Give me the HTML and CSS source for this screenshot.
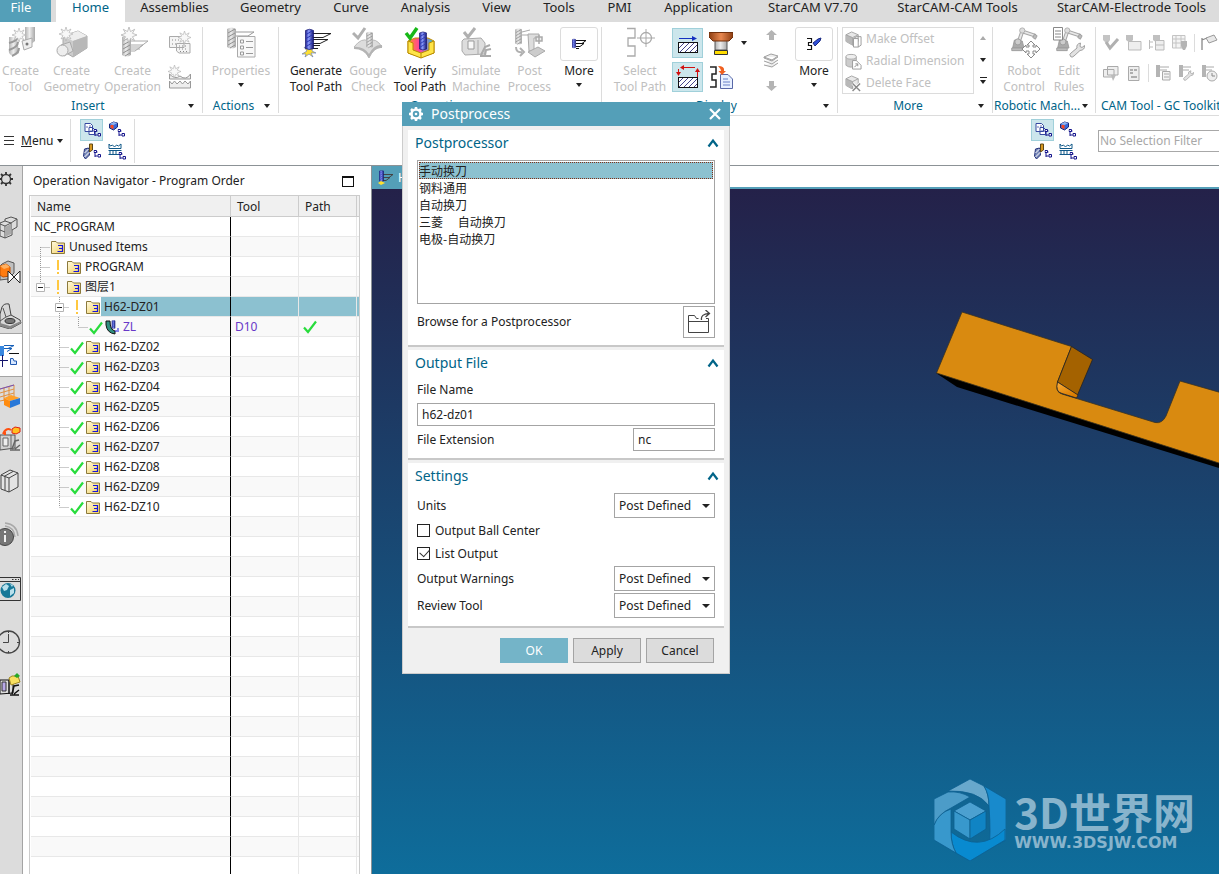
FILE: index.html
```html
<!DOCTYPE html>
<html lang="en">
<head>
<meta charset="utf-8">
<title>Postprocess</title>
<link rel="stylesheet" href="styles.css">
</head>
<body>
<svg class="defs" aria-hidden="true">
  <defs>
    <linearGradient id="gFolder" x1="0" y1="0" x2="1" y2="1"><stop offset="0" stop-color="#fffbe0"/><stop offset="1" stop-color="#f3cf60"/></linearGradient>
    <linearGradient id="gGray" x1="0" x2="1"><stop offset="0" stop-color="#b0b0b0"/><stop offset=".45" stop-color="#ededed"/><stop offset="1" stop-color="#a8a8a8"/></linearGradient>
    <linearGradient id="gBlue" x1="0" x2="1"><stop offset="0" stop-color="#20208c"/><stop offset=".4" stop-color="#8c9cff"/><stop offset="1" stop-color="#14146c"/></linearGradient>
    <linearGradient id="gCopper" x1="0" x2="1"><stop offset="0" stop-color="#8c3c10"/><stop offset=".5" stop-color="#e88850"/><stop offset="1" stop-color="#8c3c10"/></linearGradient>
    <linearGradient id="gRainbow" x1="0" x2="1"><stop offset="0" stop-color="#ff9020"/><stop offset=".45" stop-color="#ff40a0"/><stop offset="1" stop-color="#20c8d8"/></linearGradient>
    <pattern id="pHatch" width="5" height="5" patternUnits="userSpaceOnUse"><path d="M-1 6L6-1M-1 1L1-1M4 6L6 4" stroke="#14146c" stroke-width=".8"/></pattern>
  </defs>
  <symbol id="folder" viewBox="0 0 14 14"><path d="M.5 13.500V1.500H5L6.500 3H13.500V13.500Z" fill="url(#gFolder)" stroke="#8c7a3c"/><path d="M7 5.500H11.500V8.500H8V8.500M11.500 8.500V11.500H6.500" fill="none" stroke="#1414e0" stroke-width="1.200"/></symbol>
  <symbol id="check" viewBox="0 0 14 14"><path d="M1 7.500L5 12L13 1.500" fill="none" stroke="#28dc3c" stroke-width="2.200"/></symbol>
  <symbol id="minus" viewBox="0 0 9 9"><path d="M.5.500H8.500V8.500H.5Z" fill="#fff" stroke="#b4b4b4"/><path d="M2 4.500H7" stroke="#222"/></symbol>
  <symbol id="star" viewBox="0 0 14 14"><path d="M7 0L8.300 4L12 2L10 5.500L14 7L10 8.500L12 12L8.300 10L7 14L5.700 10L2 12L4 8.500L0 7L4 5.500L2 2L5.700 4Z" fill="#f8f8f8" stroke="#b4b4b4" stroke-width=".7"/></symbol>
  <symbol id="drillgray" viewBox="0 0 9 22"><path d="M0 2Q4.500-1 9 2V20Q4.500 23 0 20Z" fill="url(#gGray)"/><path d="M1 6L8 2M1 10L8 6M1 14L8 10M1 18L8 14M3 21L8 18" stroke="#909090"/></symbol>
  <symbol id="drillblue" viewBox="0 0 9 22"><path d="M.5 2Q4.500-.5 8.500 2V20Q4.500 22 .5 20Z" fill="url(#gBlue)" stroke="#14146c" stroke-width=".7"/><path d="M1 6L8 2M1 10L8 6M1 14L8 10M1 18L8 14" stroke="#2a38b4"/></symbol>
  <symbol id="robot" viewBox="0 0 32 32"><path d="M3 24L5 15L14 16L16 24Z" fill="#aaa" stroke="#999"/><path d="M10 17L14 5L29 10" stroke="#a8a8a8" stroke-width="4.500" fill="none"/><path d="M10 17L14 5L29 10" stroke="#e8e8e8" stroke-width="2" fill="none"/><circle cx="14" cy="4" r="3" fill="#ddd" stroke="#aaa"/><circle cx="9" cy="17" r="3.500" fill="#ccc" stroke="#999"/><path d="M2 24H14V27H2ZM28 8L31 10L29 14L26 12Z" fill="#bbb" stroke="#999"/></symbol>
  <symbol id="wrench" viewBox="0 0 16 16"><path d="M1.500 14.500Q0 12 2 11L8 6Q7 2 11.500 1L11 4.500L13 5.500L15.500 3.500Q16 8 11 8.500L5 14Q3 16 1.500 14.500Z" fill="#e2e2e2" stroke="#a0a0a0"/></symbol>
  <symbol id="tree" viewBox="0 0 8 8"><path d="M1.500 0V7M1.500 2H4M1.500 6H4" stroke="#14148c" fill="none"/><path d="M.5.500H3V2.500H.5ZM4.500 4.500H7V7H4.500Z" fill="#fff" stroke="#14148c"/></symbol>
  <symbol id="viewProgram" viewBox="0 0 22 22"><path d="M4.500 4.500H10L12 6.500V12.500H4.500ZM8.500 8.500H12L14 10.500V15.500H8.500Z" fill="#fff" stroke="#3448a0"/><path d="M6 8H7M9 7H10M10 12H11M12 12H13" stroke="#3448a0" stroke-width="1.500"/><use href="#tree" x="13" y="10" width="8" height="8"/></symbol>
  <symbol id="viewGeometry" viewBox="0 0 22 22"><path d="M4 5L8 3L12 4V8L8 11L4 9Z" fill="#3868d8" stroke="#18287c"/><path d="M4 5L8 3L12 4L8 6Z" fill="#90b4f0"/><path d="M5 6H8V10L5 9Z" fill="#f84820"/><use href="#tree" x="12" y="10" width="8" height="8"/></symbol>
  <symbol id="viewTool" viewBox="0 0 22 22"><path d="M4 8L8 7L9 14L5 18L3 15Z" fill="#7888b8" stroke="#26347c"/><path d="M4 12L8 8M4 16L9 11" stroke="#fff"/><path d="M9 3H12V9L9 11Z" fill="#d89820" stroke="#5c4818"/><use href="#tree" x="13" y="9" width="8" height="8"/></symbol>
  <symbol id="viewMethod" viewBox="0 0 22 22"><path d="M3.500 3V7.500H15.500V3L13 5L11 4L9 6L7 4L5 5ZM3 9.500H16M3 13.500H14M4.500 9V14M7.500 9V14M10.500 9V14" fill="none" stroke="#105888"/><use href="#tree" x="13" y="11" width="8" height="8"/></symbol>
  <symbol id="cubegray" viewBox="0 0 16 16"><path d="M1 4L7 1L14 4V11L8 15L1 11Z" fill="#e8e8e8" stroke="#a4a4a4"/><path d="M1 4L8 7V15L1 11Z" fill="#b8b8b8"/><path d="M1 4L8 7L14 4M8 7V15" fill="none" stroke="#a4a4a4"/></symbol>
  <symbol id="up" viewBox="0 0 11 10"><path d="M5.500 0L11 5H8V10H3V5H0Z" fill="#b4b4b4"/></symbol>
  <symbol id="chev" viewBox="0 0 12 10"><path d="M1.500 8.500L6 2.500L10.500 8.500" fill="none" stroke="#006488" stroke-width="2.200"/></symbol>
</svg>

<nav class="tabs" aria-label="Ribbon tabs">
  <a class="tab file" href="#">File</a><a class="tab active" href="#">Home</a><a class="tab" href="#">Assemblies</a><a class="tab" href="#">Geometry</a><a class="tab" href="#">Curve</a><a class="tab" href="#">Analysis</a><a class="tab" href="#">View</a><a class="tab" href="#">Tools</a><a class="tab" href="#">PMI</a><a class="tab" href="#">Application</a><a class="tab" href="#">StarCAM V7.70</a><a class="tab" href="#">StarCAM-CAM Tools</a><a class="tab" href="#">StarCAM-Electrode Tools</a>
</nav>

<section class="ribbon" aria-label="Ribbon">
  <div class="group g-insert">
    <div class="gbody">
      <button class="big off">
        <svg viewBox="0 0 32 32"><path d="M20 0H30V14L25 18V13H20Z" fill="url(#gGray)"/><path d="M17 14L27 11V20L19 23Z" fill="#eee" stroke="#aaa"/><circle cx="22" cy="17" r="1.500" fill="#777"/><path d="M4 10H12L14 26Q10 30 6 28Q3 26 4 22Z" fill="url(#gGray)"/><path d="M4 16Q12 14 13 10M4 23Q13 20 13 15M7 29Q14 26 14 21" fill="none" stroke="#999" stroke-width="2"/><use href="#star" x="7" y="1" width="14" height="14"/></svg>
        <span>Create<br>Tool</span></button>
      <button class="big off">
        <svg viewBox="0 0 32 32"><path d="M7 9L22 4L31 9V21L17 30L7 24Z" fill="#ccc" stroke="#aaa"/><path d="M7 9L22 4L31 9L17 14Z" fill="#eee"/><path d="M17 14L31 9V21L17 30Z" fill="#b8b8b8"/><path d="M5 18L14 15L17 24L8 29Z" fill="#ddd" stroke="#aaa"/><circle cx="6.500" cy="23.500" r="5.500" fill="#eee" stroke="#aaa"/><use href="#star" x="3" y="0" width="14" height="14"/></svg>
        <span>Create<br>Geometry</span></button>
      <button class="big off">
        <svg viewBox="0 0 32 32"><path d="M12 14H31L23 20H12M12 18H26L18 24H12M14 22H23" fill="none" stroke="#aaa"/><use href="#drillgray" x="5" y="8" width="9" height="22"/><use href="#star" x="4" y="0" width="16" height="16"/></svg>
        <span>Create<br>Operation</span></button>
      <div class="stack">
        <button class="small" aria-label="Create Program"><svg viewBox="0 0 24 24"><path d="M1.500 5.500H14L16 8V16.500H1.500ZM8.500 12.500H22V22H11L8.500 20Z" fill="#f4f4f4" stroke="#aaa"/><path d="M4 9H13M4 13H8M11 15H20M11 18H20M12 20.500H20" stroke="#888" stroke-dasharray="1 2"/><use href="#star" x="10" y="0" width="13" height="13"/></svg></button>
        <button class="small" aria-label="Create Method"><svg viewBox="0 0 24 24"><path d="M1.500 14V9Q7 15 12 11Q18 16 22.500 9V14Z" fill="#eee" stroke="#999"/><path d="M1.500 23V16L4 19L6.500 16L9 19L12 16L14.500 19L17 16L20 19L22.500 16V23Z" fill="#eee" stroke="#999"/><use href="#star" x="0" y="0" width="13" height="13"/></svg></button>
      </div>
    </div>
    <button class="glabel"><span>Insert</span><i class="arr"></i></button>
  </div>

  <div class="group g-actions">
    <div class="gbody">
      <button class="big off"><svg viewBox="0 0 32 32"><path d="M10 5H29L23 9H10" fill="none" stroke="#999"/><use href="#drillgray" x="2" y="0" width="9" height="22"/><path d="M12.500 9.500H30V30H12.500Z" fill="#f8f8f8" stroke="#aaa"/><path d="M15.500 13H18.500V16H15.500ZM15.500 19H18.500V22H15.500ZM15.500 25H18.500V28H15.500ZM21 14.500H28M21 20.500H28M21 26.500H28" fill="none" stroke="#999"/></svg>
      <span>Properties</span><i class="arr"></i></button>
    </div>
    <button class="glabel"><span>Actions</span><i class="arr"></i></button>
  </div>

  <div class="group g-ops">
    <div class="gbody">
      <button class="big"><svg viewBox="0 0 32 32"><path d="M12 6.500H31L23 10.500H12M12 12.500H28L20 16.500H12M12 18.500H20M12 21.500H18" fill="none" stroke="#222"/><path d="M2 27L7 24L4 20L9 23L13 19L12 24L16 26L11 26L13 30L9 27L5 30L6 27Z" fill="#ffe030" stroke="#5870b8" stroke-width=".6"/><use href="#drillblue" x="5" y="1" width="9" height="23"/></svg><span>Generate<br>Tool Path</span></button>
      <button class="big off"><svg viewBox="0 0 32 32"><path d="M2 20Q10 10 16 14Q24 10 30 20Q22 20 17 31Q12 20 2 20Z" fill="#ddd" stroke="#bbb"/><path d="M2 20Q12 19 17 27Q22 17 30 18V21Q22 20 17 31Q12 22 2 22Z" fill="#b4b4b4"/><use href="#drillgray" x="14" y="4" width="7" height="18"/><path d="M1 6L6 11L13 1" fill="none" stroke="#b0b0b0" stroke-width="3"/></svg><span>Gouge<br>Check</span></button>
      <button class="big"><svg viewBox="0 0 32 32"><path d="M4 14L11 11H24L30 14V26L17 30L4 26Z" fill="url(#gRainbow)" stroke="#c89000"/><path d="M4 14L9 16V23L17 26L25 23V16L30 14V26L17 31L4 26Z" fill="#ffe448" stroke="#b88c00"/><path d="M17 26V31" stroke="#b88c00"/><use href="#drillblue" x="15" y="4" width="8" height="20"/><path d="M2 6L6 11L13 1" fill="none" stroke="#18b818" stroke-width="3.500"/></svg><span>Verify<br>Tool Path</span></button>
      <button class="big off"><svg viewBox="0 0 32 32"><path d="M4 12L21 11L25 16V27L5 28L2 24V14Z" fill="#ddd" stroke="#aaa"/><path d="M8 14H14V22H8Z" fill="#f8f8f8" stroke="#999"/><path d="M18 13V27" stroke="#aaa"/><path d="M21 28L25 20L30 18M25 28L26 23L31 22M20 29H31" fill="none" stroke="#aaa" stroke-width="2"/><path d="M4 5L8 10L15 1" fill="none" stroke="#b0b0b0" stroke-width="3"/></svg><span>Simulate<br>Machine</span></button>
      <button class="big off"><svg viewBox="0 0 32 32"><use href="#drillgray" x="1" y="1" width="7" height="17"/><path d="M8 5L16 3M8 8H17" stroke="#aaa"/><path d="M14 7H25V11H20V24H15Z" fill="#ddd" stroke="#aaa"/><path d="M25 8V17M22 10H28V14H22Z" fill="#eee" stroke="#aaa" stroke-width="1.500"/><path d="M14 25L24 20L31 24L21 30Z" fill="#ccc" stroke="#aaa"/><path d="M2 20Q2 26 8 25M6 21L10 25L6 29" fill="none" stroke="#b0b0b0" stroke-width="2"/></svg><span>Post<br>Process</span></button>
      <button class="big more"><span class="mbox"><svg viewBox="0 0 18 18"><path d="M6 5.500H16L12 8.500H6M6 8.500H14L10 11.500H6M6 13.500H9" fill="none" stroke="#111"/><use href="#drillblue" x="2" y="3" width="4" height="11"/></svg></span><span>More</span><i class="arr"></i></button>
    </div>
    <button class="glabel"><span>Operations</span></button>
  </div>

  <div class="group g-display">
    <div class="gbody">
      <button class="big off"><svg viewBox="0 0 32 32"><path d="M3 1.500H11V11H4V19H11V29H3" fill="none" stroke="#aaa" stroke-width="1.300"/><circle cx="22" cy="11" r="5.500" fill="none" stroke="#aaa" stroke-width="1.300"/><path d="M22 2V20M13 11H31" stroke="#aaa"/></svg><span>Select<br>Tool Path</span></button>
      <div class="toggles">
        <button class="toggle" aria-label="Show feed"><svg viewBox="0 0 24 24"><path d="M3 7.500H19" stroke="#1430c0"/><path d="M16 5L21 7.500L16 10Z" fill="#1430c0"/><rect x="2.500" y="11.500" width="19" height="10" fill="#fff"/><rect x="2.500" y="11.500" width="19" height="10" fill="url(#pHatch)" stroke="#111"/></svg></button>
        <button class="toggle" aria-label="Show travel"><svg viewBox="0 0 24 24"><path d="M6 2.500H19M2.500 4V10M21.500 12V7" stroke="#d01010"/><path d="M8 0V5L4 2.500ZM0 7H5L2.500 11ZM19 7H24L21.500 3Z" fill="#d01010"/><rect x="2.500" y="12.500" width="19" height="10" fill="#fff"/><rect x="2.500" y="12.500" width="19" height="10" fill="url(#pHatch)" stroke="#111"/></svg></button>
      </div>
      <div class="toggles">
        <button class="plain" aria-label="Tool display"><svg viewBox="0 0 24 24"><path d="M6 6H18V19H6Z" fill="url(#gGray)" stroke="#555"/><path d="M0 1.500H24V6L20 10H4L0 6Z" fill="url(#gCopper)" stroke="#70300c"/><path d="M5.500 19.500H18.500V23.500H5.500Z" fill="#ffdc00" stroke="#333"/></svg></button>
        <button class="plain" aria-label="Export path"><svg viewBox="0 0 24 24"><path d="M1 2H7V9H3V15H7V22H1" fill="none" stroke="#222" stroke-width="1.500"/><path d="M11.500 9.500H19L23.500 14V23.500H11.500Z" fill="#e8f0ff" stroke="#5868a8"/><path d="M14 14H19M14 17H21M14 20H21" stroke="#6880c8"/><path d="M9 1Q16 1 15 6H17L13 10L9.500 6H12Q12 4 9 1Z" fill="#f06020"/></svg></button>
      </div>
      <i class="arr dd"></i>
      <div class="layers">
        <svg viewBox="0 0 11 10"><use href="#up"/></svg>
        <svg class="mid" viewBox="0 0 16 15"><path d="M1 4L8 1L15 3L9 7ZM1 8L9 11L15 7M1 12L9 14L15 10M1 4V5L9 8L15 4" fill="#eee" stroke="#a0a0a0"/></svg>
        <svg class="flip" viewBox="0 0 11 10"><use href="#up"/></svg>
      </div>
      <button class="big more"><span class="mbox"><svg viewBox="0 0 18 18"><path d="M2 3.500H6.500V7.500H3.500V10.500H6.500V14.500H2" fill="none" stroke="#111" stroke-width="1.200"/><path d="M8 8L13 4L16 3L15 6L10 11Z" fill="#3050d8" stroke="#182880"/></svg></span><span>More</span><i class="arr"></i></button>
    </div>
    <button class="glabel"><span>Display</span><i class="arr"></i></button>
  </div>

  <div class="group g-more">
    <div class="gbody">
      <div class="gallery">
        <button><svg viewBox="0 0 18 18"><use href="#cubegray" width="16" height="16"/><path d="M9 8H14V17H9Z" fill="#fff" stroke="#999"/><path d="M9 8L12 6H17V15L14 17" fill="none" stroke="#999"/></svg>Make Offset</button>
        <button><svg viewBox="0 0 18 18"><path d="M1 4Q6 0 12 4V13Q6 17 1 13Z" fill="#ccc" stroke="#aaa"/><ellipse cx="6.500" cy="4" rx="5.500" ry="2.500" fill="#eee" stroke="#aaa"/><path d="M8 8H12L17 13V17H8Z" fill="#fff" stroke="#999"/><path d="M10 15L13 12M11 11.500H13.500V14" stroke="#888" fill="none"/></svg>Radial Dimension</button>
        <button><svg viewBox="0 0 18 18"><use href="#cubegray" width="16" height="16"/><path d="M8 9L16 17M16 9L8 17" stroke="#fff" stroke-width="3"/><path d="M8 9L16 17M16 9L8 17" stroke="#888" stroke-width="1.500"/></svg>Delete Face</button>
      </div>
      <div class="gscroll"><i class="arr upg"></i><i class="arr"></i><i class="arr bar"></i></div>
    </div>
    <button class="glabel"><span>More</span><i class="arr"></i></button>
  </div>

  <div class="group g-robot">
    <div class="gbody">
      <button class="big off"><svg viewBox="0 0 32 32"><use href="#robot" width="32" height="28"/><path d="M23 14L27 18H25V20H28V18L32 22L28 26V24H25V27H27L23 31L19 27H21V24H18V26L14 22L18 18V20H21V18H19Z" fill="#fff" stroke="#888"/></svg><span>Robot<br>Control</span></button>
      <button class="big off"><svg viewBox="0 0 32 32"><use href="#robot" width="32" height="28"/><path d="M.5.500H9.500V13H.5Z" fill="#fff" stroke="#888"/><path d="M2 4H8M2 7H8M2 10H8" stroke="#888"/><use href="#wrench" x="16" y="15" width="16" height="16"/></svg><span>Edit<br>Rules</span></button>
    </div>
    <button class="glabel"><span>Robotic Mach...</span><i class="arr"></i></button>
  </div>

  <div class="group g-gc">
    <div class="gbody gc">
      <div class="gcrow">
        <svg viewBox="0 0 18 18"><path d="M1 1H8V6L6 9H4L1 6Z" fill="#c4c4c4"/><path d="M4 8L8 14L16 5" fill="none" stroke="#b0b0b0" stroke-width="3"/></svg>
        <svg viewBox="0 0 18 18"><path d="M1 1H8V6L5 9L1 6Z" fill="#c0c0c0"/><path d="M3.500 7.500H16V16H3.500Z" fill="#eee" stroke="#bbb"/></svg>
        <svg viewBox="0 0 18 18"><path d="M5 1H12V6L9 9L5 6Z" fill="#c0c0c0"/><path d="M1.500 6V15M1 8H5M1 13H5M7.500 6.500H16V16H7.500ZM7 11H16" fill="#eee" stroke="#bbb"/></svg>
        <svg viewBox="0 0 18 18"><path d="M1.500 1.500H14V14H1.500ZM1 5H14M1 9H14M5 1V14M10 1V14" fill="#f4f4f4" stroke="#c4c4c4"/><path d="M10 7H16V12L14 16H12L10 12Z" fill="#b4b4b4"/></svg>
        <i class="vsep"></i>
        <svg viewBox="0 0 18 18"><path d="M2 4V16M2 6L7 4" stroke="#888" fill="none" stroke-width="1.300"/><path d="M6 4L14 1L17 6L9 9Z" fill="#e8e8e8" stroke="#999"/></svg>
      </div>
      <div class="gcrow">
        <svg viewBox="0 0 18 18"><path d="M5.500 2.500H16V11H5.500ZM1.500 5.500H12V13H1.500Z" fill="#eee" stroke="#aaa"/><path d="M9 11H14L11 17Z" fill="#bbb"/></svg>
        <svg viewBox="0 0 18 18"><path d="M3.500 2.500H14V16.500H3.500Z" fill="#eee" stroke="#aaa"/><path d="M5 6H8M9 6H12M5 9H8M6 13H12" stroke="#999" stroke-width="1.500"/></svg>
        <i class="vsep"></i>
        <svg viewBox="0 0 18 18"><path d="M2 1H6V13H2Z" fill="#b4b4b4"/><path d="M6 3H15M6 6H13" stroke="#aaa"/><path d="M8.500 7.500H16V16H8.500ZM10 10H15M10 13H15" fill="#f4f4f4" stroke="#aaa"/></svg>
        <svg viewBox="0 0 18 18"><path d="M2 1H6V13H2Z" fill="#b4b4b4"/><path d="M6 3H14M6 6H12" stroke="#aaa"/><use href="#wrench" x="6" y="6" width="11" height="11"/></svg>
        <svg viewBox="0 0 18 18"><path d="M2 1H6V13H2Z" fill="#b4b4b4"/><path d="M6 3H14M6 6H12" stroke="#aaa"/><circle cx="12" cy="12" r="5" fill="#eee" stroke="#aaa"/><path d="M12 9V12H15" stroke="#888" fill="none"/></svg>
      </div>
    </div>
    <button class="glabel"><span>CAM Tool - GC Toolkits</span></button>
  </div>
</section>

<section class="bar2" aria-label="Border bar">
  <button class="menu"><svg viewBox="0 0 10 10"><path d="M0 .5H10M0 4.500H10M0 8.500H10" stroke="#333"/></svg><span><u>M</u>enu</span><i class="arr"></i></button>
  <div class="views">
    <button class="on" aria-label="Program Order View"><svg><use href="#viewProgram"/></svg></button>
    <button aria-label="Geometry View"><svg><use href="#viewGeometry"/></svg></button>
    <button aria-label="Machine Tool View"><svg><use href="#viewTool"/></svg></button>
    <button aria-label="Method View"><svg><use href="#viewMethod"/></svg></button>
  </div>
  <div class="views right">
    <button class="on" aria-label="Program Order"><svg><use href="#viewProgram"/></svg></button>
    <button aria-label="Geometry"><svg><use href="#viewGeometry"/></svg></button>
    <button aria-label="Machine Tool"><svg><use href="#viewTool"/></svg></button>
    <button aria-label="Method"><svg><use href="#viewMethod"/></svg></button>
  </div>
  <input class="filter" type="text" placeholder="No Selection Filter" aria-label="Selection filter">
</section>

<main class="work">
  <aside class="side">
    <svg viewBox="4 0 26 26"><circle cx="10" cy="13" r="4.500" fill="none" stroke="#333" stroke-width="1.300"/><path d="M10 6V8.500M10 17.500V20M3 13H5.500M14.500 13H17M5 8L7 10M13 16L15 18M5 18L7 16M13 10L15 8" stroke="#333" stroke-width="1.800"/></svg>
    <svg class="s23" viewBox="0 0 26 26"><path d="M0 8L5 6V4L11 2L17 4V12L12 15V20L5 23L0 21Z" fill="#ddd" stroke="#555"/><path d="M5 6L11 8L17 4M11 8V15M0 9L5 11L11 8M5 11V23M0 15L5 17L11 14" fill="none" stroke="#555"/><path d="M5 12L11 9V19L5 22Z" fill="#aaa"/></svg>
    <svg class="s18" viewBox="0 0 26 26"><path d="M2 5L8 2L14 4V14L8 20L0 21V7Z" fill="#c0c0c0" stroke="#555"/><path d="M0 7L6 5L10 8V17L3 18L0 16Z" fill="#ff7c10" stroke="#c05000"/><path d="M0 7L6 5L10 8L4 10Z" fill="#ffb060"/><path d="M8 12V24L20 12V24Z" fill="#fff" stroke="#222"/></svg>
    <svg class="s18" viewBox="0 0 26 26"><path d="M2 4Q4 0 9 1L11 12L20 17L21 20L10 26L0 23V11Z" fill="#d8d8d8" stroke="#444"/><path d="M3 5L6 14L0 18M6 14L11 12" fill="none" stroke="#555"/><ellipse cx="10" cy="18" rx="5" ry="2.500" fill="#777" stroke="#333"/><path d="M0 20L10 23L21 18V20L10 26L0 23Z" fill="#888"/></svg>
    <div class="sactive"><svg viewBox="0 0 26 26"><path d="M0 3H4V13H0Z" fill="#3888e0"/><path d="M4 2.500H14L8 5.500H4M4 5.500H12L7 8.500" fill="none" stroke="#1860b8"/><path d="M9 10.500H19" stroke="#111"/><path d="M2.500 12V24M0 17.500H8" stroke="#14146c"/><path d="M10.500 15.500H13L14 18H16.500V21.500H10.500Z" fill="#d8e8ff" stroke="#2058b0"/></svg></div>
    <svg class="s7" viewBox="0 0 26 26"><path d="M0 5L14 1V14M0 9L14 5M0 13L14 9M4 4V17M9 2V15M0 17L5 16" fill="none" stroke="#e09040"/><path d="M0 5L14 1" stroke="#7050c0"/><path d="M4 14L11 11L20 14L10 17Z" fill="#ffa028"/><path d="M4 14L10 17V24L4 21Z" fill="#ff8c10"/><path d="M10 17L20 14V20L10 24Z" fill="#2878d8"/></svg>
    <svg class="s16" viewBox="0 0 26 26"><path d="M0 9H15V22L0 24Z" fill="#d0d0d0" stroke="#555"/><path d="M3 12H8V20H3ZM11 9V22" fill="#eee" stroke="#666"/><path d="M12 23L15 15L19 14M15 23L20 19M10 24H20" fill="none" stroke="#666" stroke-width="1.500"/><path d="M3 8Q6 1 11 4M5 6V9" fill="none" stroke="#ff5010" stroke-width="2"/><path d="M12 3L15 1L20 2V6L16 8L12 7Z" fill="#ffc020" stroke="#e02010"/></svg>
    <svg class="s16" viewBox="0 0 26 26"><path d="M1 7L10 2L18 5V19L9 24L1 21Z" fill="#e4e4e4" stroke="#444"/><path d="M1 7L9 10V24M9 10L18 5M4 8.500L13 3.500M5 22V9" fill="none" stroke="#444"/></svg>
    <svg class="s28" viewBox="0 0 26 26"><path d="M5 4Q14 5 15 15M5 1Q17 2 18 14M5 7Q11 8 12 13" fill="none" stroke="#a8a8a8" stroke-width="1.400"/><circle cx="5" cy="15" r="8.500" fill="#777" stroke="#444"/><path d="M5 13V20M5 9V11" stroke="#fff" stroke-width="1.800"/></svg>
    <svg class="s28" viewBox="0 0 26 26"><path d="M-1 1.500H20.500V24.500H-1M-1 5.500H20.500" fill="none" stroke="#333"/><path d="M12 3.500H19" stroke="#333" stroke-dasharray="1.500 1.500"/><circle cx="8" cy="14.500" r="7.500" fill="#187898"/><path d="M2 11L6 8L9 10L7 14L4 15ZM10 14L14 12L14 17L10 20ZM10 8L13 9L12 11Z" fill="#b8e0ec"/></svg>
    <svg class="s27" viewBox="0 0 26 26"><circle cx="8.500" cy="13" r="11" fill="none" stroke="#444" stroke-width="1.300"/><path d="M8.500 5V13.500H3M8.500 2V4M8.500 22V24M17 13.500H19" fill="none" stroke="#444"/></svg>
    <svg class="s18" viewBox="0 0 26 26"><path d="M0 7H13V20L0 21Z" fill="#ddd" stroke="#111"/><path d="M2 9H6V18H2Z" fill="#b8a8e8" stroke="#333"/><path d="M9 7V21M12 21L14 13L19 12M14 21L19 17M10 22H19" fill="none" stroke="#111" stroke-width="1.500"/><path d="M9 5L12 3H18L20 9L11 12Z" fill="#f8e060" stroke="#a08820"/><path d="M14 3L17 0L20 3L17 5Z" fill="#28a828"/></svg>
  </aside>

  <section class="navigator">
    <header class="ntitle"><h2>Operation Navigator - Program Order</h2><button class="maxi" aria-label="Maximize"></button></header>
    <div class="tree">
      <table>
        <colgroup><col class="c1"><col class="c2"><col class="c3"><col class="c4"></colgroup>
        <thead><tr><th>Name</th><th>Tool</th><th>Path</th><th></th></tr></thead>
        <tbody>
          <tr><td class="root">NC_PROGRAM</td><td></td><td></td><td></td></tr>
          <tr><td><div class="node"><svg class="w1"><path class="dots" d="M9.500 10V20M9.500 10.500H19"/><use href="#folder" x="20" y="3" width="14" height="14"/></svg>Unused Items</div></td><td></td><td></td><td></td></tr>
          <tr><td><div class="node"><svg class="w2"><path class="dots" d="M9.500 0V20M9.500 10.500H19"/><path class="bang" d="M27 3V13M27 15V17"/><use href="#folder" x="36" y="3" width="14" height="14"/></svg>PROGRAM</div></td><td></td><td></td><td></td></tr>
          <tr><td><div class="node"><svg class="w2"><path class="dots" d="M9.500 0V10M9.500 10.500H19"/><use href="#minus" x="5" y="6" width="9" height="9"/><path class="bang" d="M27 3V13M27 15V17"/><use href="#folder" x="36" y="3" width="14" height="14"/></svg>图层1</div></td><td></td><td></td><td></td></tr>
          <tr class="sel"><td><div class="node"><svg class="w3"><path class="dots" d="M28.500 0V20M28.500 10.500H38"/><use href="#minus" x="24" y="6" width="9" height="9"/><path class="bang" d="M46 3V13M46 15V17"/><use href="#folder" x="55" y="3" width="14" height="14"/></svg><span class="hit">H62-DZ01</span></div></td><td></td><td></td><td></td></tr>
          <tr class="op"><td><div class="node"><svg class="w4"><path class="dots" d="M28.500 0V20M47.500 0V10M47.500 10.500H57"/><use href="#check" x="58" y="4" width="14" height="14"/><path d="M75 4V8Q76 16 84 17V14Q79 13 79 4Z" fill="#309080" stroke="#111"/><use href="#drillblue" x="80" y="3" width="5" height="9"/><path d="M86 12H88M84 14H88" stroke="#1414e0"/></svg>ZL</div></td><td>D10</td><td><svg class="done" viewBox="0 0 14 14"><use href="#check"/></svg></td><td></td></tr>
          <tr><td><div class="node"><svg class="w3"><path class="dots" d="M28.500 0V20M28.500 10.500H38"/><use href="#check" x="39" y="4" width="14" height="14"/><use href="#folder" x="55" y="3" width="14" height="14"/></svg><span>H62-DZ02</span></div></td><td></td><td></td><td></td></tr>
          <tr><td><div class="node"><svg class="w3"><path class="dots" d="M28.500 0V20M28.500 10.500H38"/><use href="#check" x="39" y="4" width="14" height="14"/><use href="#folder" x="55" y="3" width="14" height="14"/></svg><span>H62-DZ03</span></div></td><td></td><td></td><td></td></tr>
          <tr><td><div class="node"><svg class="w3"><path class="dots" d="M28.500 0V20M28.500 10.500H38"/><use href="#check" x="39" y="4" width="14" height="14"/><use href="#folder" x="55" y="3" width="14" height="14"/></svg><span>H62-DZ04</span></div></td><td></td><td></td><td></td></tr>
          <tr><td><div class="node"><svg class="w3"><path class="dots" d="M28.500 0V20M28.500 10.500H38"/><use href="#check" x="39" y="4" width="14" height="14"/><use href="#folder" x="55" y="3" width="14" height="14"/></svg><span>H62-DZ05</span></div></td><td></td><td></td><td></td></tr>
          <tr><td><div class="node"><svg class="w3"><path class="dots" d="M28.500 0V20M28.500 10.500H38"/><use href="#check" x="39" y="4" width="14" height="14"/><use href="#folder" x="55" y="3" width="14" height="14"/></svg><span>H62-DZ06</span></div></td><td></td><td></td><td></td></tr>
          <tr><td><div class="node"><svg class="w3"><path class="dots" d="M28.500 0V20M28.500 10.500H38"/><use href="#check" x="39" y="4" width="14" height="14"/><use href="#folder" x="55" y="3" width="14" height="14"/></svg><span>H62-DZ07</span></div></td><td></td><td></td><td></td></tr>
          <tr><td><div class="node"><svg class="w3"><path class="dots" d="M28.500 0V20M28.500 10.500H38"/><use href="#check" x="39" y="4" width="14" height="14"/><use href="#folder" x="55" y="3" width="14" height="14"/></svg><span>H62-DZ08</span></div></td><td></td><td></td><td></td></tr>
          <tr><td><div class="node"><svg class="w3"><path class="dots" d="M28.500 0V20M28.500 10.500H38"/><use href="#check" x="39" y="4" width="14" height="14"/><use href="#folder" x="55" y="3" width="14" height="14"/></svg><span>H62-DZ09</span></div></td><td></td><td></td><td></td></tr>
          <tr><td><div class="node"><svg class="w3"><path class="dots" d="M28.500 0V10M28.500 10.500H38"/><use href="#check" x="39" y="4" width="14" height="14"/><use href="#folder" x="55" y="3" width="14" height="14"/></svg><span>H62-DZ10</span></div></td><td></td><td></td><td></td></tr>
          <tr><td></td><td></td><td></td><td></td></tr><tr><td></td><td></td><td></td><td></td></tr><tr><td></td><td></td><td></td><td></td></tr><tr><td></td><td></td><td></td><td></td></tr><tr><td></td><td></td><td></td><td></td></tr><tr><td></td><td></td><td></td><td></td></tr><tr><td></td><td></td><td></td><td></td></tr><tr><td></td><td></td><td></td><td></td></tr><tr><td></td><td></td><td></td><td></td></tr><tr><td></td><td></td><td></td><td></td></tr><tr><td></td><td></td><td></td><td></td></tr><tr><td></td><td></td><td></td><td></td></tr><tr><td></td><td></td><td></td><td></td></tr><tr><td></td><td></td><td></td><td></td></tr><tr><td></td><td></td><td></td><td></td></tr><tr><td></td><td></td><td></td><td></td></tr><tr><td></td><td></td><td></td><td></td></tr><tr><td></td><td></td><td></td><td></td></tr>
        </tbody>
      </table>
    </div>
  </section>

  <section class="graphics">
    <div class="gtabs"><a class="gtab" href="#"><svg viewBox="0 0 18 18"><path d="M7 5.500H17L13 8.500H7M7 8.500H14L10 11.500H7" fill="none" stroke="#444"/><use href="#drillblue" x="3" y="1" width="5" height="12"/><path d="M2 14L5 12L9 14L5 16Z" fill="#ffe030"/></svg>H62</a></div>
    <div class="scene">
      <svg class="part" viewBox="936 310 286 162">
        <defs><linearGradient id="gFil" x1="0" y1="0" x2=".5" y2="1"><stop offset="0" stop-color="#ffae38"/><stop offset="1" stop-color="#d87c00"/></linearGradient></defs>
        <path d="M936 373L957 387L1222 469V463L960 378Z" fill="#000"/>
        <path d="M962 312L1071.500 346.500L1057.500 382L1057 389Q1058 393 1062 394L1155 422.500Q1162 424 1166 416L1180 381L1222 393V464L936.500 373Z" fill="#d98a10" stroke="#3c3420" stroke-width=".8"/>
        <path d="M1071.500 346.500L1092.500 359.500L1077.500 395L1057.500 382Z" fill="#a46200" stroke="#222" stroke-width=".8"/>
        <path d="M1057.500 382L1078 395L1076.500 398L1062 393.500Q1055 392 1057.500 382Z" fill="url(#gFil)" stroke="#222" stroke-width=".8"/>
      </svg>
      <div class="mark">
        <svg viewBox="0 0 72 82"><g stroke="#0c6090" stroke-width=".8"><path d="M36 0L14 12Q44 11 55 27Q55 15 50 7Z" fill="#68a8cc"/><path d="M50 7L72 20V61L55 70Q57 55 55 27Q55 15 50 7Z" fill="#188acc"/><path d="M71 50V61L36 82L22 74Q17 65 17 53Q45 75 71 50Z" fill="#088ad0"/><path d="M0 61V46Q4 34 17 30L17 53Q17 65 22 74Z" fill="#3898cc"/><path d="M0 46V20L14 13Q26 12 36 18L17 29Q4 35 0 46Z" fill="#4c9cc8"/><path d="M36 23L52 32L36 41L20 32Z" fill="#4ca0d0"/><path d="M20 32L36 41V60L20 50Z" fill="#3898cc"/><path d="M52 32V50L36 60V41Z" fill="#1084c4"/></g></svg>
        <div class="mtext"><strong>3D世界网</strong><span>WWW.3DSJW.COM</span></div>
      </div>
    </div>
  </section>
</main>

<form class="dialog" aria-label="Postprocess">
  <header class="dtitle">
    <svg viewBox="0 0 16 16"><circle cx="8" cy="8" r="4.500" fill="none" stroke="#fff" stroke-width="2.500"/><circle cx="8" cy="8" r="1.300" fill="#fff"/><path d="M8 1V3M8 13V15M1 8H3M13 8H15M3 3L4.500 4.500M11.500 11.500L13 13M3 13L4.500 11.500M11.500 4.500L13 3" stroke="#fff" stroke-width="2.500"/></svg>
    <h1>Postprocess</h1>
    <button type="button" aria-label="Close"><svg viewBox="0 0 12 12"><path d="M1 1L11 11M11 1L1 11" stroke="#fff" stroke-width="2.200"/></svg></button>
  </header>
  <fieldset class="sec s-post">
    <div class="shead"><h3>Postprocessor</h3><svg><use href="#chev"/></svg></div>
    <select class="list" size="8" aria-label="Postprocessor"><option selected>手动换刀</option><option>钢料通用</option><option>自动换刀</option><option>三菱　&nbsp;自动换刀</option><option>电极-自动换刀</option></select>
    <div class="row browse"><span>Browse for a Postprocessor</span><button type="button" class="open" aria-label="Browse for a Postprocessor"><svg viewBox="0 0 24 24"><path d="M1.500 22.500V5.500H7.500L9.500 8.500H11.500M19 8.500H21.500V22.500H1.500M1.500 11.500H21.500" fill="none" stroke="#444"/><path d="M14.500 10Q13.500 4 22 3.500M18.500 0L22.500 3.500L18.500 7" fill="none" stroke="#444" stroke-width="1.300"/></svg></button></div>
  </fieldset>
  <fieldset class="sec s-out">
    <div class="shead"><h3>Output File</h3><svg><use href="#chev"/></svg></div>
    <label class="row fname" for="fn">File Name</label>
    <input class="box" id="fn" type="text" value="h62-dz01">
    <div class="row ext"><label for="fe">File Extension</label><input class="box short" id="fe" type="text" value="nc"></div>
  </fieldset>
  <fieldset class="sec s-set">
    <div class="shead"><h3>Settings</h3><svg><use href="#chev"/></svg></div>
    <div class="row opt"><label for="un">Units</label><span class="dd-wrap"><select id="un"><option>Post Defined</option></select></span></div>
    <label class="tick"><input type="checkbox">Output Ball Center</label>
    <label class="tick"><input type="checkbox" checked>List Output</label>
    <div class="row opt"><label for="ow">Output Warnings</label><span class="dd-wrap"><select id="ow"><option>Post Defined</option></select></span></div>
    <div class="row opt"><label for="rt">Review Tool</label><span class="dd-wrap"><select id="rt"><option>Post Defined</option></select></span></div>
  </fieldset>
  <footer class="dfoot"><button type="button" class="ok">OK</button><button type="button">Apply</button><button type="button">Cancel</button></footer>
</form>
</body>
</html>
```
FILE: styles.css
```css
* { box-sizing: border-box; }
body {
  margin: 0;
  height: 100vh;
  display: flex;
  flex-direction: column;
  overflow: hidden;
  position: relative;
  background: #fff;
  color: #222;
  font: 12px/16px "Noto Sans", "Noto Sans CJK SC", sans-serif;
}
button, input, select { font: inherit; color: inherit; }
button { border: 0; background: none; padding: 0; }
h1, h2, h3 { margin: 0; font-weight: 400; }
a { color: inherit; text-decoration: none; }
svg { display: block; flex: none; }
.defs { position: absolute; width: 0; height: 0; }

.arr {
  display: block;
  flex: none;
  border: 3px solid transparent;
  border-top: 4px solid #222;
  border-bottom: 0;
}

/* ribbon tabs */
.tabs {
  flex: none;
  display: grid;
  grid-template-columns: 56px 69px 99px 93px 68px 81px 61px 64px 57px 101px 128px 161px 187px;
  height: 22px;
  background: #dcdcdc;
  overflow: hidden;
}
.tab { font-size: 13px; line-height: 15px; text-align: center; white-space: nowrap; }
.tab.file { margin-right: 5px; padding-right: 9px; background: #549fb8; color: #fff; }
.tab.active { background: #fff; color: #006488; }

/* ribbon */
.ribbon { flex: none; display: flex; height: 94px; padding-top: 5px; border-bottom: 1px solid #dcdcdc; overflow: hidden; }
.group { flex: none; display: flex; flex-direction: column; height: 86px; border-right: 1px solid #dcdcdc; }
.gbody { flex: none; display: flex; height: 71px; }
.g-insert { width: 203px; }
.g-actions { width: 76px; }
.g-ops { width: 323px; padding-left: 11px; }
.g-display { width: 236px; padding-left: 8px; }
.g-more { width: 155px; }
.g-robot { width: 103px; }
.g-gc { flex: 1 0 123px; border-right: 0; }
.big { flex: none; display: flex; flex-direction: column; align-items: center; width: 52px; white-space: nowrap; text-align: center; }
.big > svg { width: 32px; height: 32px; margin-bottom: 4px; }
.big > span { margin: 0 -20px; }
.big .arr { margin-top: 4px; }
.big.off { color: #c0c0c0; }
.g-insert .big { width: 61px; }
.g-insert .big:first-child { width: 41px; }
.g-actions .big { width: 76px; }
.g-ops .big:nth-child(4) { width: 60px; }
.g-ops .big:nth-child(5) { width: 47px; }
.g-display .big:first-child { width: 60px; }
.big.more { width: 52px; }
.big.more .mbox { flex: none; width: 38px; height: 34px; margin: 0 0 2px; border: 1px solid #dcdcdc; border-radius: 3px; display: flex; align-items: center; justify-content: center; }
.mbox svg { width: 18px; height: 18px; }
.stack { display: flex; flex-direction: column; gap: 10px; padding: 4px 0 0 5px; }
.small, .small svg { width: 24px; height: 24px; }
.glabel { flex: none; display: flex; align-items: center; height: 16px; color: #006488; white-space: nowrap; padding-right: 8px; }
.glabel span { flex: 1; text-align: center; }
.g-insert .glabel span { padding-right: 12px; }
.g-robot .glabel { padding: 0 7px 0 1px; }
.g-robot .glabel span, .g-gc .glabel span { text-align: left; }
.g-gc .glabel { padding-left: 5px; }
.toggles { flex: none; display: flex; flex-direction: column; gap: 4px; padding: 1px 0 0 2px; }
.toggle, .plain { width: 31px; height: 30px; display: flex; align-items: center; justify-content: center; }
.toggle { background: #cce6ec; border: 1px solid #a0d0da; }
.toggles svg { width: 24px; height: 24px; }
.arr.dd { margin: 14px 0 0 5px; }
.layers { width: 52px; display: flex; flex-direction: column; align-items: center; gap: 13px; padding: 3px 0 0 4px; }
.layers svg { width: 11px; height: 10px; }
.layers .mid { width: 16px; height: 15px; }
.flip { transform: rotate(180deg); }
.g-display .gbody .more { width: 46px; }
.gallery { width: 132px; height: 67px; margin: 0 0 0 4px; border: 1px solid #dcdcdc; }
.gallery button { display: flex; align-items: center; gap: 4px; height: 22px; color: #c0c0c0; white-space: nowrap; padding-left: 2px; }
.gallery svg { width: 17px; height: 17px; }
.gscroll { display: flex; flex-direction: column; gap: 18px; padding: 9px 0 0 6px; }
.arr.upg { border-top: 0; border-bottom: 4px solid #aaa; }
.arr.bar { position: relative; }
.arr.bar::before { content: ""; position: absolute; left: -3px; top: -7px; width: 7px; height: 1px; background: #222; }
.g-robot .gbody { padding-left: 7px; }
.g-robot .big { width: 48px; }
.g-robot .big + .big { width: 42px; }
.gc { flex-direction: column; gap: 12px; padding: 7px 0 0 6px; }
.gcrow { display: flex; gap: 5px; align-items: center; }
.gcrow svg { width: 18px; height: 18px; }
.gcrow .vsep { width: 1px; height: 18px; background: #dcdcdc; }

/* secondary bar */
.bar2 { flex: none; display: flex; height: 50px; border-bottom: 1px solid #8c9296; align-items: center; }
.menu { display: flex; align-items: center; gap: 7px; width: 71px; height: 43px; padding-left: 4px; border-right: 1px solid #dcdcdc; }
.menu svg { width: 10px; height: 10px; }
.menu .arr { margin-left: -4px; }
.views { flex: none; width: 64px; height: 44px; padding-left: 9px; display: grid; grid-template-columns: 25px 25px; grid-auto-rows: 22px; border-right: 1px solid #dcdcdc; }
.views button, .views svg { width: 23px; height: 22px; }
.views .on { background: #cce6ec; outline: 1px solid #a0d0da; outline-offset: -1px; }
.views.right { margin-left: auto; border: 0; width: 76px; }
.filter { flex: none; width: 130px; height: 22px; margin-right: -9px; border: 1px solid #a8a8a8; padding: 0 1px; outline: 0; }
.filter::placeholder { color: #a8a8a8; opacity: 1; }

/* work area */
.work { flex: 1; min-height: 0; display: flex; }
.side { flex: none; width: 23px; background: #dcdcdc; border-right: 1px solid #a4a4a4; overflow: hidden; }
.side svg { width: 26px; height: 26px; }
.s7 { margin-top: 7px; }
.s16 { margin-top: 16px; }
.s18 { margin-top: 18px; }
.s23 { margin-top: 23px; }
.s27 { margin-top: 27px; }
.s28 { margin-top: 28px; }
.sactive { width: 23px; height: 44px; margin-top: 4px; padding-top: 9px; background: #fff; border: solid #a4a4a4; border-width: 1px 0; }

.navigator { flex: none; width: 349px; padding: 0 11px 0 6px; border-right: 1px solid #8c9296; overflow: hidden; }
.ntitle { display: flex; align-items: center; justify-content: space-between; height: 29px; padding: 1px 6px 0 4px; }
.ntitle h2 { font-size: 12px; }
.maxi { width: 12px; height: 11px; border: 1px solid #111; border-top-width: 2px; }
.tree { padding-left: 1px; border: 1px solid #ccc; }
table { width: 100%; border-collapse: separate; border-spacing: 0; table-layout: fixed; }
.c1 { width: 200px; }
.c2 { width: 68px; }
.c3 { width: 58px; }
th { height: 21px; padding: 1px 6px 0; text-align: left; font-weight: 400; background: #f0f0f0; border: solid #ccc; border-width: 0 1px 1px 0; }
th:last-child, td:last-child { border-right: 0; }
td { height: 20px; padding: 0 4px; line-height: 19px; border: solid #e8e8e8; border-width: 0 1px 1px 0; white-space: nowrap; }
td:first-child { padding: 0; border-right-color: #000; }
td.root { padding-left: 3px; }
tbody tr:nth-child(even) td { background: #f9f9f9; }
.node { display: flex; height: 19px; }
.node svg { height: 19px; overflow: visible; }
.w1 { width: 38px; }
.w2 { width: 54px; }
.w3 { width: 70px; }
.w4 { width: 92px; }
.w3 + span { flex: 1; padding-left: 3px; }
.hit, tbody tr.sel td:nth-child(n+2) { background: #8cc1d0; }
.op { color: #6838c8; }
.done { width: 14px; height: 14px; }
.dots { fill: none; stroke: #999; stroke-dasharray: 1 1; }
.bang { stroke: #ffc840; stroke-width: 2; }

.graphics { flex: 1; min-width: 0; display: flex; flex-direction: column; }
.gtabs { flex: none; height: 23px; border-bottom: 2px solid #549fb8; }
.gtab { display: flex; align-items: center; gap: 4px; width: 120px; height: 23px; padding-left: 4px; background: #549fb8; color: #fff; }
.gtab svg { width: 18px; height: 18px; }
.scene { flex: 1; position: relative; overflow: hidden; background: linear-gradient(#242149, #0e6d9b); }
.part { position: absolute; right: -3px; top: 121px; width: 286px; height: 162px; }
.mark { position: absolute; right: 24px; bottom: 13px; display: flex; align-items: center; gap: 8px; color: #88b4cc; }
.mark svg { width: 72px; height: 82px; }
.mtext { display: flex; flex-direction: column; }
.mtext strong { font: 700 42px/46px "Noto Sans CJK SC", sans-serif; }
.mtext span { font: 700 16px/18px "DejaVu Sans", sans-serif; }

/* dialog */
.dialog { position: absolute; left: 402px; top: 102px; width: 328px; background: #f0f0f0; border: 1px solid #ccc; border-top: 0; }
.dtitle { display: flex; align-items: center; gap: 7px; height: 24px; margin: 0 -1px 4px; padding: 0 9px 0 6px; background: #549fb8; color: #fff; }
.dtitle svg { width: 16px; height: 16px; }
.dtitle h1 { flex: 1; font-size: 14px; }
.dtitle button svg { width: 12px; height: 12px; }
.sec { margin: 0 5px 3px; padding: 0 9px; border: 0; border-bottom: 2px solid #c8c8c8; background: #fff; min-width: 0; }
.s-post { height: 217px; }
.s-out { height: 110px; }
.s-set { height: 165px; }
.shead { display: flex; align-items: center; justify-content: space-between; height: 26px; margin: 0 -4px 0 -2px; }
.shead h3 { font-size: 14px; color: #006488; }
.shead svg { width: 12px; height: 10px; }
.list { display: block; width: 100%; height: 144px; margin-top: 4px; padding: 1px; border: 1px solid #a4a4a4; border-radius: 0; background: #fff; font: 12px/16px "Noto Sans CJK SC", sans-serif; outline: 0; overflow: hidden; }
.list option { height: 17px; min-height: 17px; padding: 0; line-height: 16px; color: #222; }
.list option:checked { background: #8cc1d0 linear-gradient(#8cc1d0, #8cc1d0); color: #222; outline: 1px dotted #803018; outline-offset: -1px; }
.row { display: flex; align-items: center; justify-content: space-between; }
.browse { height: 36px; }
.open { width: 32px; height: 32px; border: 1px solid #a4a4a4; display: flex; align-items: center; justify-content: center; }
.open svg { width: 24px; height: 24px; }
.fname { height: 27px; padding-top: 1px; }
.box { display: block; width: 100%; height: 23px; padding: 0 4px; border: 1px solid #a4a4a4; border-radius: 0; background: #fff; outline: 0; }
.box.short { width: 82px; }
.ext { height: 27px; }
.opt { height: 27px; }
.shead + .opt { margin-top: 3px; }
.dd-wrap { position: relative; display: block; }
.dd-wrap::after { content: ""; position: absolute; right: 5px; top: 11px; border: 4px solid transparent; border-top: 4px solid #222; border-bottom: 0; pointer-events: none; }
.dd-wrap select { display: block; appearance: none; width: 101px; height: 25px; padding: 0 4px; border: 1px solid #a4a4a4; border-radius: 0; background: #fff; }
.tick { display: flex; align-items: center; gap: 5px; height: 23px; }
.tick input { appearance: none; width: 13px; height: 13px; margin: 0; border: 1px solid #222; background: #fff; position: relative; }
.tick input:checked::after { content: ""; position: absolute; left: 2px; top: 1px; width: 8px; height: 5px; border: solid #333; border-width: 0 0 1px 1px; transform: rotate(-48deg); }
.dfoot { display: flex; justify-content: flex-end; gap: 5px; padding: 7px 15px 10px; }
.dfoot button { width: 68px; height: 25px; background: #dcdcdc; border: 1px solid #a4a4a4; }
.dfoot .ok { background: #74b4c8; border-color: #74b4c8; color: #fff; }
```
